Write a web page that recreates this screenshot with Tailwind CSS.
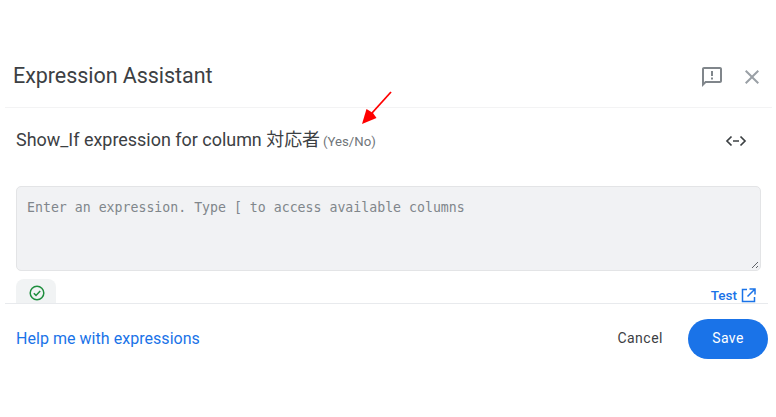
<!DOCTYPE html>
<html lang="en">
<head>
  <meta charset="UTF-8" />
  <title>Expression Assistant</title>
  <script src="https://cdn.jsdelivr.net/npm/@tailwindcss/browser@4"></script>
</head>
<body class="relative w-[776px] h-[417px] overflow-hidden bg-white font-['Roboto','Noto_Sans_CJK_JP',sans-serif] text-[#3c4043]">

  <!-- header -->
  <header class="mt-[49px] ml-[5px] mr-[4px] h-[59px] pl-2 pr-[8px] pb-[4px] flex items-center justify-between border-b border-[#f3f3f4]">
    <h1 class="text-[21.500px] leading-[54px] text-[#3c4043] tracking-[-0.050px]">Expression Assistant</h1>
    <div class="flex items-center gap-[16px] pt-[2px]">
      <svg class="w-[24px] h-[24px] text-[#80868b]" viewBox="0 0 24 24" fill="currentColor"><path d="M20 2H4c-1.100 0-2 .900-2 2v18l4-4h14c1.100 0 2-.900 2-2V4c0-1.100-.900-2-2-2zm0 14H5.200L4 17.200V4h16v12z"/><path d="M11 6h2v5h-2zM11 12.500h2v2h-2z"/></svg>
      <svg class="w-[24px] h-[24px] text-[#9aa0a6]" viewBox="0 0 24 24" fill="currentColor"><path d="M19 6.410 17.590 5 12 10.590 6.410 5 5 6.410 10.590 12 5 17.590 6.410 19 12 13.410 17.590 19 19 17.590 13.410 12z"/></svg>
    </div>
  </header>

  <!-- column line -->
  <div class="h-[66px] pl-4 pr-[28px] flex items-center justify-between">
    <p class="pb-[2px] text-[17.950px] text-[#3c4043]">Show_If expression for column 対応者<span class="ml-[3px] text-[13.200px] text-[#70757a]">(Yes/No)</span></p>
    <svg class="w-[24px] h-[24px] text-[#3c4043]" viewBox="0 0 24 24" fill="none" stroke="currentColor" stroke-width="1.700"><path d="M7.500 7.500 3 12l4.500 4.500M16.500 7.500 21 12l-4.500 4.500M9 12h6"/></svg>
  </div>

  <!-- expression box -->
  <div class="mt-[12px] ml-4 mr-[15px] h-[85px] rounded-[5px] border border-[#e3e4e6] bg-[#f1f2f4] relative px-[10px] pt-[12px] font-['DejaVu_Sans_Mono',monospace] text-[13.230px] leading-[18px] text-[#80868b]">
    Enter an expression. Type [ to access available columns
    <svg class="absolute right-[1px] bottom-[1px] w-[8px] h-[8px] text-[#5f6368]" viewBox="0 0 8 8" stroke="currentColor" fill="none"><path d="M1 7 7 1M5 7l2-2"/></svg>
  </div>

  <!-- status row -->
  <div class="mt-[8px] mx-4 h-[24px] flex justify-between">
    <div class="w-[40px] h-[24px] rounded-t-[8px] bg-[#f1f3f4] pl-[13px] pt-[6px]">
      <svg class="w-[16px] h-[16px] text-[#1e8e3e]" viewBox="0 0 16 16" fill="none" stroke="currentColor" stroke-width="1.500"><circle cx="8" cy="8" r="6.800"/><path d="M4.800 8.200l2.200 2.200 4.200-4.400"/></svg>
    </div>
    <a href="#" class="flex items-start pt-[8px] gap-[4px] mr-[4px] text-[13.500px] leading-[16px] font-medium text-[#1a73e8]">Test
      <svg class="w-[15px] h-[15px] mt-[1px]" viewBox="0 0 15 15" fill="none" stroke="currentColor" stroke-width="1.500"><path d="M6 1.500H1.500v12h12V9M8.500 1H14v5.500M14 1 6.500 8.500"/></svg>
    </a>
  </div>

  <!-- footer -->
  <footer class="ml-[5px] mr-[8px] h-[70px] border-t border-[#e8eaed] pl-[11px] flex items-center justify-between">
    <a href="#" class="text-[16px] tracking-[0.040px] text-[#1a73e8]">Help me with expressions</a>
    <div class="flex items-center gap-[25px]">
      <button class="text-[14px] tracking-[0.500px] text-[#3c4043]">Cancel</button>
      <button class="w-[80px] h-[40px] rounded-full bg-[#1a73e8] text-white text-[14px] tracking-[0.400px]">Save</button>
    </div>
  </footer>

  <!-- annotation arrow -->
  <svg class="absolute left-[355px] top-[85px] w-[44px] h-[44px] text-[#f00]" viewBox="0 0 44 44" fill="currentColor">
    <path d="M36 7 17 28" stroke="currentColor" stroke-width="1.800" fill="none"/>
    <path d="M7 39l4.500-15 6.500 4 3.500 5z"/>
  </svg>
</body>
</html>
